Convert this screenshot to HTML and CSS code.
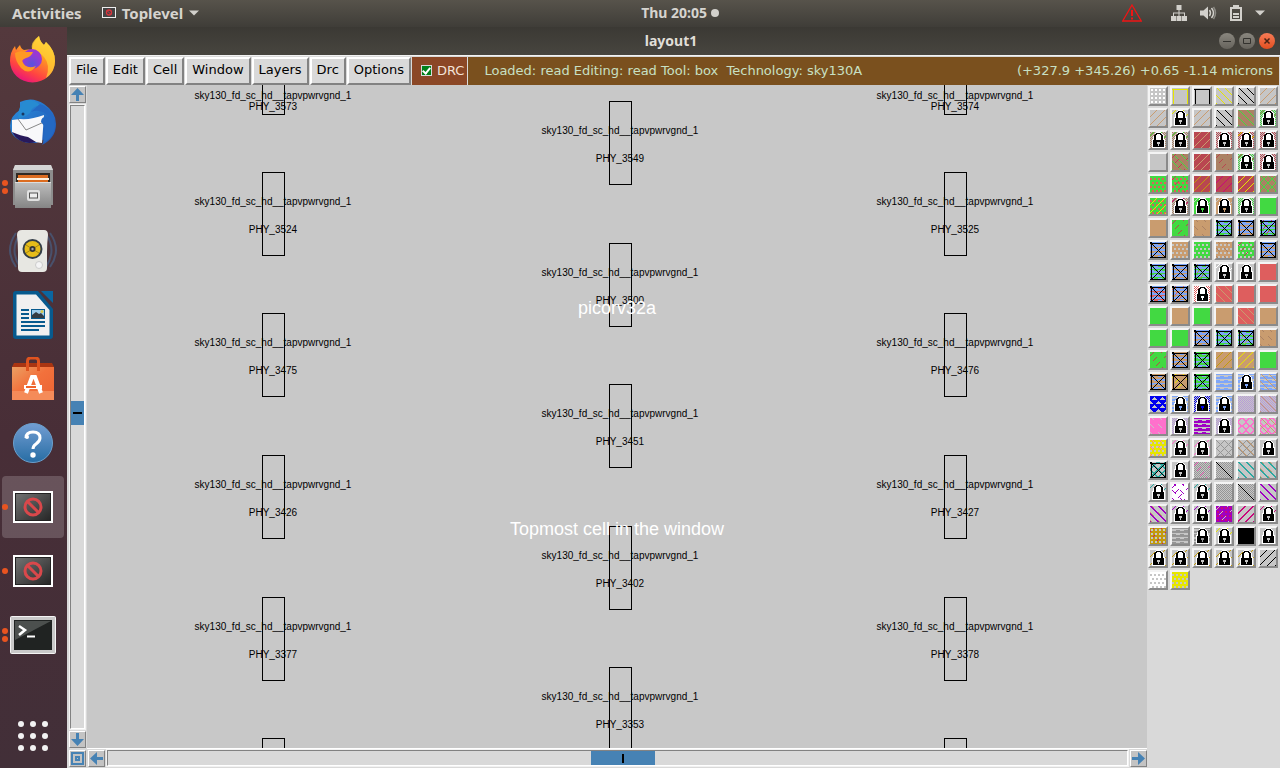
FILE: index.html
```html
<!DOCTYPE html>
<html lang="en">
<head>
<meta charset="utf-8">
<title>layout1</title>
<link rel="stylesheet" href="styles.css">
</head>
<body>
<header class="topbar">
  <div class="topbar-left">
    <button class="top-btn">Activities</button>
    <button class="top-btn app-menu">
      <svg width="14" height="11" viewBox="0 0 14 11"><rect x=".5" y=".5" width="13" height="10" fill="#444" stroke="#eee"/><circle cx="7" cy="5.500" r="2.500" fill="none" stroke="#d8343c" stroke-width="1.300"/><path d="M5 3.500l4 4" stroke="#d8343c"/></svg>
      Toplevel
      <svg width="10" height="6" viewBox="0 0 10 6"><path d="M0 .5h10L5 5.500z" fill="#d2d0cb"/></svg>
    </button>
  </div>
  <button class="top-btn clock">Thu 20:05<span class="dot"></span></button>
  <div class="tray">
    <svg class="warn" width="20" height="18" viewBox="0 0 20 18"><path d="M10 1L19.300 17H.7z" fill="none" stroke="#f01414" stroke-width="1.300"/><path d="M10 6v6M10 13.500v2" stroke="#f01414" stroke-width="2"/></svg>
    <svg width="16" height="16" viewBox="0 0 16 16" fill="#d2d0cb"><path d="M5.500 0h5v5h-5zM0 11h5v5H0zM5.500 11h5v5h-5zM11 11h5v5h-5zM7.500 5h1v6h-1zM2 7.500h12V11h-1V8.500H3V11H2z"/></svg>
    <svg width="17" height="14" viewBox="0 0 17 14"><path d="M0 4.500h3.500L8 .5v13L3.500 9.500H0z" fill="#d2d0cb"/><path d="M9.500 4q2 3 0 6M11.500 2q4 5 0 10" fill="none" stroke="#d2d0cb" stroke-width="1.500"/><path d="M13.500 1q4 6 0 12" fill="none" stroke="#8b8983" stroke-width="1.500"/></svg>
    <svg width="12" height="16" viewBox="0 0 12 16"><path d="M1 3h10v12H1z" fill="none" stroke="#d2d0cb" stroke-width="2"/><path d="M3 0h6v3H3zM3 8h6v2H3zM3 11h6v2H3z" fill="#d2d0cb"/></svg>
    <svg width="10" height="6" viewBox="0 0 10 6"><path d="M0 .5h10L5 5.500z" fill="#d2d0cb"/></svg>
  </div>
</header>
<div class="desktop">
  <nav class="dock" aria-label="Dock">
    <button class="dock-item" aria-label="Firefox">
      <svg width="48" height="48" viewBox="0 0 48 48"><defs><linearGradient id="ff" x1=".8" y1="0" x2=".3" y2="1"><stop offset="0" stop-color="#fff04a"/><stop offset=".4" stop-color="#ff9a22"/><stop offset=".75" stop-color="#ff4541"/><stop offset="1" stop-color="#e8117f"/></linearGradient><radialGradient id="fp" cx=".5" cy=".75"><stop offset="0" stop-color="#5a53dc"/><stop offset="1" stop-color="#9a38d2"/></radialGradient></defs><path d="M30 1q1 6 5 9l2-3q9 8 9 19a22.500 21.500 0 0 1-45 0Q1 17 6 11l1 4q2-3 4-5 1 4 4 5 4-1 8 0 0-8 7-14z" fill="url(#ff)"/><path d="M23 15q-2-8 7-14 1 6 5 9l2-3q9 8 9 19 0 11-9 17 5-13-2-21-5-6-12-7z" fill="#ffcf36" opacity=".75"/><circle cx="23" cy="24" r="10" fill="url(#fp)"/><path d="M6 18q5-3 10-1h8q-2 5-7 6-3 1-4 3 4 9 14 5-7 10-15 2-6-7-6-15z" fill="#ff9924"/></svg>
    </button>
    <button class="dock-item" aria-label="Thunderbird">
      <svg width="50" height="50" viewBox="0 0 50 50"><defs><linearGradient id="tb" x1="0" y1="0" x2="1" y2="1"><stop offset="0" stop-color="#2b91dd"/><stop offset="1" stop-color="#2154b4"/></linearGradient></defs><path d="M12 4Q24-2 36 6q12 8 12 20 0 14-14 21l3-6-9 4Q10 46 3 34-1 20 12 12z" fill="url(#tb)"/><path d="M4 22l8-1q11 1 24-4l-2 28Q12 42 4 34z" fill="#f8f8fa"/><path d="M10 21l8 11 18-8" fill="none" stroke="#888"/><path d="M10 20Q10 5 20 2q7 0 12 5-9 2-10 8-6 5-12 5z" fill="#278bd1"/><path d="M23 14q10-4 18 5-8-1-8 5l4 5-2 16q15-8 11-24Q41 8 32 6z" fill="#2469c3"/><circle cx="15" cy="16" r="1.500" fill="#183762"/><path d="M4 34q9 4 16 5l8 5Q12 48 4 34z" fill="#28195b"/></svg>
    </button>
    <button class="dock-item" aria-label="Files">
      <span class="run two"></span>
      <svg width="44" height="46" viewBox="0 0 44 46"><defs><linearGradient id="fi" x1="0" y1="0" x2="0" y2="1"><stop offset="0" stop-color="#bebebe"/><stop offset="1" stop-color="#858585"/></linearGradient></defs><path d="M4 1h36l2 5v35H2V6z" fill="#8d8d8d"/><path d="M4 1h36l2 5H2z" fill="#d5d5d5"/><path d="M5 9h34v10H5z" fill="#302923"/><path d="M7 11h30v7H7z" fill="#dc6c20"/><path d="M6 14h32v2H6z" fill="#fff0dc"/><path d="M4 18h36v26H4z" fill="url(#fi)"/><path d="M4 18.500h36" stroke="#ddd"/><rect x="16" y="26" width="13" height="11" rx="2" fill="#e1e1e1"/><rect x="18.500" y="29" width="8" height="5" fill="#eee" stroke="#555"/></svg>
    </button>
    <button class="dock-item" aria-label="Rhythmbox">
      <svg width="50" height="44" viewBox="0 0 50 44"><path d="M8 4q-12 17 0 34M12 5Q1 21 12 38M42 4q12 17 0 34M38 5q11 16 0 33" fill="none" stroke="#49516c" stroke-width="2"/><path d="M14 1h22q4 0 4 5-1 8-1 17v16q0 4-4 4H14q-4 0-4-4V23q0-9-1-17 0-5 5-5z" fill="#e7e7e2"/><circle cx="24.500" cy="20" r="10" fill="#333d47"/><circle cx="24.500" cy="20" r="8" fill="#e6bc19"/><path d="M18 16l13 8M31 16l-13 8" stroke="#a88a12"/><circle cx="24.500" cy="20" r="3" fill="#333"/><circle cx="24.500" cy="20" r="1.200" fill="#aaa"/><circle cx="31" cy="36" r="3.500" fill="#f4f4f4" stroke="#ccc"/></svg>
    </button>
    <button class="dock-item" aria-label="Writer">
      <svg width="40" height="48" viewBox="0 0 40 48"><path d="M3 0h22l15 18v27q0 3-3 3H3q-3 0-3-3V3q0-3 3-3z" fill="#075a8e"/><path d="M28 0h12v12z" fill="#0b66a0"/><path d="M3.500 3.500H23L36.500 19v25.500h-33z" fill="#f0f0f0"/><path d="M8 19h8M8 23h8M8 27h8M8 31h24M8 35h24M8 39h18" stroke="#075a8e" stroke-width="2"/><path d="M18 18h14v10H18z" fill="#075a8e"/><path d="M19 19h12v8H19z" fill="#9cccec"/><path d="M19 27v-3l4-3 3 2 2-1 3 3v2z" fill="#343c43"/><circle cx="29" cy="20.500" r="1.500" fill="#d9c84b"/></svg>
    </button>
    <button class="dock-item" aria-label="Software">
      <svg width="42" height="44" viewBox="0 0 42 44"><defs><linearGradient id="sw" x1="0" y1="0" x2="1" y2="1"><stop offset="0" stop-color="#eca063"/><stop offset=".45" stop-color="#f2713c"/><stop offset="1" stop-color="#eb6333"/></linearGradient></defs><path d="M2 6h38l2 4v3H0v-3z" fill="#a93512"/><path d="M0 10h42v33H0z" fill="url(#sw)"/><path d="M0 34h42v9H0z" fill="#f58b59"/><path d="M15.500 14V4q0-3 3-3h5q3 0 3 3v10" fill="none" stroke="#df531f" stroke-width="3"/><path d="M14 36l6-16h3l6 16M12 30h18" fill="none" stroke="#fff" stroke-width="4"/><path d="M14 30h10" stroke="#ef642c" stroke-width="2"/></svg>
    </button>
    <button class="dock-item" aria-label="Help">
      <svg width="42" height="42" viewBox="0 0 42 42"><defs><linearGradient id="hp" x1="0" y1="0" x2="0" y2="1"><stop offset="0" stop-color="#729dd2"/><stop offset="1" stop-color="#276da4"/></linearGradient></defs><circle cx="21" cy="21" r="19.500" fill="url(#hp)" stroke="#6ba0cd"/><path d="M14 16q0-6 7-6 7 0 7 6 0 3-4 6-3 2-3 5" fill="none" stroke="#fff" stroke-width="3"/><circle cx="15" cy="15" r="2" fill="#fff"/><circle cx="21" cy="33" r="2.700" fill="#fff"/></svg>
    </button>
    <button class="dock-item active" aria-label="Toplevel 1">
      <span class="run"></span>
      <svg width="40" height="32" viewBox="0 0 40 32"><defs><linearGradient id="xw" x1="0" y1="0" x2="1" y2="1"><stop offset="0" stop-color="#777"/><stop offset="1" stop-color="#222"/></linearGradient></defs><rect x="1" y="1" width="38" height="30" fill="url(#xw)" stroke="#fff" stroke-width="2"/><rect x="2.500" y="2.500" width="35" height="27" fill="none" stroke="#222"/><circle cx="20" cy="16" r="8" fill="none" stroke="#d9484b" stroke-width="3"/><path d="M14.500 10.500l11 11" stroke="#d9484b" stroke-width="3"/></svg>
    </button>
    <button class="dock-item" aria-label="Toplevel 2">
      <span class="run"></span>
      <svg width="40" height="32" viewBox="0 0 40 32"><rect x="1" y="1" width="38" height="30" fill="url(#xw)" stroke="#fff" stroke-width="2"/><rect x="2.500" y="2.500" width="35" height="27" fill="none" stroke="#222"/><circle cx="20" cy="16" r="8" fill="none" stroke="#d9484b" stroke-width="3"/><path d="M14.500 10.500l11 11" stroke="#d9484b" stroke-width="3"/></svg>
    </button>
    <button class="dock-item" aria-label="Terminal">
      <span class="run two"></span>
      <svg width="46" height="38" viewBox="0 0 46 38"><rect x=".5" y=".5" width="45" height="37" rx="1" fill="#c9c9c9" stroke="#f4f4f4"/><rect x="4" y="4" width="38" height="30" fill="#202322"/><path d="M5 5h36L5 24z" fill="#4c504e"/><path d="M9 10l6 4-6 5" fill="none" stroke="#fff" stroke-width="2.500"/><path d="M17 20.500h8" stroke="#fff" stroke-width="2"/></svg>
    </button>
    <button class="dock-item apps" aria-label="Show applications">
      <svg width="32" height="32" viewBox="0 0 32 32" fill="#f2f2f2"><circle cx="4" cy="4" r="3"/><circle cx="16" cy="4" r="3"/><circle cx="28" cy="4" r="3"/><circle cx="4" cy="16" r="3"/><circle cx="16" cy="16" r="3"/><circle cx="28" cy="16" r="3"/><circle cx="4" cy="28" r="3"/><circle cx="16" cy="28" r="3"/><circle cx="28" cy="28" r="3"/></svg>
    </button>
  </nav>
  <main class="window">
    <div class="titlebar">
      <h1 class="title">layout1</h1>
      <div class="controls">
        <button class="ctl" aria-label="Minimize"><svg width="8" height="8" viewBox="0 0 8 8"><path d="M0 4.500h8" stroke="#33322e"/></svg></button>
        <button class="ctl" aria-label="Maximize"><svg width="8" height="8" viewBox="0 0 8 8"><path d="M.5 1.500h7v5h-7z" fill="none" stroke="#33322e"/></svg></button>
        <button class="ctl close" aria-label="Close"><svg width="8" height="8" viewBox="0 0 8 8"><path d="M1.500 1.500l5 5M6.500 1.500l-5 5" stroke="#4a2314" stroke-width="1.500"/></svg></button>
      </div>
    </div>
    <div class="menubar">
      <button class="menu">File</button><button class="menu">Edit</button><button class="menu">Cell</button><button class="menu">Window</button><button class="menu">Layers</button><button class="menu">Drc</button><button class="menu">Options</button>
      <label class="drc"><input type="checkbox" class="drc-box" checked>DRC</label>
      <div class="status"><span class="loaded">Loaded: read Editing: read Tool: box&nbsp; Technology: sky130A</span><span>(+327.9 +345.26) +0.65 -1.14 microns</span></div>
    </div>
    <div class="work">
      <div class="editor">
        <div class="vbar">
          <button class="arrow" aria-label="Scroll up"><svg width="13" height="13" viewBox="0 0 13 13"><path d="M6.500 0L13 7H8v6H5V7H0z"/></svg></button>
          <div class="trough vertical"><div class="space before"></div><div class="thumb"></div><div class="space after"></div></div>
          <button class="arrow" aria-label="Scroll down"><svg width="13" height="13" viewBox="0 0 13 13"><path d="M6.500 13L13 6H8V0H5v6H0z"/></svg></button>
        </div>
        <svg class="layout" id="layout" role="img" aria-label="Cell layout"></svg>
        <button class="arrow corner" aria-label="Zoom to fit"><svg width="13" height="13" viewBox="0 0 13 13"><path d="M0 0h13v13H0zM2 2v9h9V2zM4 4h5v5H4zM6 6v1h1V6z" fill-rule="evenodd"/></svg></button>
        <div class="hbar">
          <button class="arrow" aria-label="Scroll left"><svg width="13" height="13" viewBox="0 0 13 13"><path d="M0 6.500L7 0v5h6v3H7v5z"/></svg></button>
          <div class="trough horizontal"><div class="space before"></div><div class="thumb"></div><div class="space after"></div></div>
          <button class="arrow" aria-label="Scroll right"><svg width="13" height="13" viewBox="0 0 13 13"><path d="M13 6.500L6 0v5H0v3h6v5z"/></svg></button>
        </div>
      </div>
      <aside class="palette" id="palette" aria-label="Layers"></aside>
    </div>
  </main>
</div>
<script src="app.js"></script>
</body>
</html>
```
FILE: styles.css
```css
* { box-sizing: border-box; }
body {
  margin: 0;
  height: 100vh;
  display: flex;
  flex-direction: column;
  overflow: hidden;
  font-family: "DejaVu Sans", sans-serif;
  font-size: 13px;
  background: #d9d9d9;
}
button { font: inherit; color: inherit; padding: 0; margin: 0; border: 0; background: none; }
svg { display: block; }

.topbar {
  flex: none;
  height: 27px;
  display: grid;
  grid-template-columns: 628fr auto 545fr;
  align-items: center;
  padding: 0 15px 2px 12px;
  background: linear-gradient(#57534b, #3f3d38);
  color: #d6d4cf;
  font-family: "Noto Sans", sans-serif;
  font-weight: 700;
  font-size: 14px;
  line-height: 24px;
}
.topbar-left { display: flex; gap: 20px; font-size: 15px; }
.top-btn { display: flex; align-items: center; gap: 6px; }
.clock { gap: 4px; }
.dot { width: 8px; height: 8px; border-radius: 50%; background: #d2d0cb; }
.tray { display: flex; align-items: center; justify-content: flex-end; gap: 13px; }
.warn { margin-right: 16px; }

.desktop { flex: 1; min-height: 0; display: flex; }
.dock {
  flex: none;
  width: 67px;
  display: flex;
  flex-direction: column;
  background: linear-gradient(#54393d, #482e37 55%, #422f38);
}
.dock-item {
  position: relative;
  height: 64px;
  display: flex;
  align-items: center;
  justify-content: center;
  padding-right: 1px;
}
.active::before {
  content: "";
  position: absolute;
  inset: 1px 3px 1px 2px;
  border-radius: 4px;
  background: rgba(255, 255, 255, .18);
}
.active svg { position: relative; }
.apps { margin-top: auto; }
.run {
  position: absolute;
  left: 2px;
  width: 6px;
  height: 6px;
  border-radius: 50%;
  background: #e95420;
}
.run.two { top: 25px; }
.run.two::after {
  content: "";
  position: absolute;
  left: 0;
  top: 8px;
  width: 6px;
  height: 6px;
  border-radius: 50%;
  background: #e95420;
}

.window { flex: 1; min-width: 0; display: flex; flex-direction: column; }
.titlebar {
  height: 28px;
  display: grid;
  grid-template-columns: 1fr auto 1fr;
  align-items: center;
  padding-right: 5px;
  background: linear-gradient(#3b3934, #47453f);
  color: #e0ded8;
}
.title {
  grid-column: 2;
  margin: 0;
  font: 700 14px/28px "Noto Sans", sans-serif;
}
.controls { display: flex; justify-content: flex-end; gap: 4px; }
.ctl {
  width: 16px;
  height: 16px;
  border-radius: 50%;
  display: flex;
  align-items: center;
  justify-content: center;
  background: linear-gradient(#8a877f, #66635c);
}
.close { background: linear-gradient(#f77b56, #e14f20); }

.menubar {
  height: 30px;
  display: flex;
  border-top: 1px solid #f2f2f2;
  padding: 1px 1px 0 2px;
  background: #d9d9d9;
  line-height: 22px;
}
.menu {
  padding: 0 5px 2px;
  border: 2px solid;
  border-color: #fff #828282 #828282 #fff;
  margin-right: 1px;
  background: #d9d9d9;
  color: #000;
}
.drc {
  display: flex;
  align-items: center;
  gap: 5px;
  padding: 0 3px 1px 9px;
  border-right: 1px solid #d9d9d9;
  background: #8b4726;
  color: #f3e2d8;
}
.drc-box {
  appearance: none;
  width: 11px;
  height: 11px;
  margin: 0;
  border: 1px solid #d9d9d9;
  background: #00801a;
}
.drc-box::after {
  content: "";
  display: block;
  width: 3px;
  height: 6px;
  margin: 0 auto;
  border: solid #fff;
  border-width: 0 2px 2px 0;
  transform: rotate(40deg);
}
.status {
  flex: 1;
  display: flex;
  justify-content: space-between;
  align-items: center;
  padding: 0 6px 1px 16px;
  background: #7a501e;
  color: #c8e0c4;
  white-space: nowrap;
}

.work { flex: 1; min-height: 0; display: flex; }
.editor {
  flex: 1;
  min-width: 0;
  display: grid;
  grid-template-columns: 20px 1fr;
  grid-template-rows: 1fr 20px;
}
.vbar { display: flex; flex-direction: column; gap: 1px; padding: 1px 1px 0 2px; min-height: 0; }
.hbar { display: flex; gap: 1px; padding: 1px 0 1px 1px; border-top: 1px solid #fff; }
.arrow {
  flex: none;
  width: 17px;
  height: 17px;
  padding: 1px;
  border: 1px solid;
  border-color: #fff #828282 #828282 #fff;
  background: #c3c3c3;
  fill: #4682b4;
}
.corner { margin: 2px 1px 1px 2px; }
.trough {
  flex: 1;
  display: flex;
  border: 1px solid;
  border-color: #828282 #fff #fff #828282;
  outline: 1px solid #f2f2f2;
}
.trough.vertical { flex-direction: column; margin: 1px; }
.trough.horizontal { margin: 0 1px 1px; }
.thumb { background: #4682b4; display: flex; }
.thumb::after { content: ""; margin: auto; background: #000; }
.vertical .thumb { flex: 24; }
.vertical .before { flex: 295; }
.vertical .after { flex: 303; }
.vertical .thumb::after { width: 9px; height: 2px; }
.horizontal .thumb { flex: 63; }
.horizontal .before { flex: 483; }
.horizontal .after { flex: 472; }
.horizontal .thumb::after { width: 2px; height: 9px; }

.layout { width: 100%; height: 100%; background: #c8c8c8; overflow: hidden; }
.cell { fill: none; stroke: #000; shape-rendering: crispEdges; }
.label { font: 10px "Liberation Sans", sans-serif; text-anchor: middle; fill: #000; }
.note { font: 18px "Liberation Sans", sans-serif; text-anchor: middle; fill: #fff; }

.palette {
  flex: none;
  display: grid;
  grid-template-columns: repeat(6, 20px);
  grid-auto-rows: 20px;
  gap: 2px;
  padding: 1px 2px 0 1px;
  background: #d9d9d9;
}
.swatch {
  border: 2px solid;
  border-color: #f4f4f4 #8a8a8a #8a8a8a #f4f4f4;
}
```
FILE: app.js
```js
const NS = "http://www.w3.org/2000/svg";

const layout = document.getElementById("layout");
function add(tag, attrs, text) {
  const el = document.createElementNS(NS, tag);
  for (const k in attrs) el.setAttribute(k, attrs[k]);
  if (text) el.textContent = text;
  layout.append(el);
}
// Each tap cell: left edge, top edge, instance number.
const cells = [
  [175, -54, 3573], [857, -54, 3574],
  [522, 16, 3549], [175, 87, 3524], [857, 87, 3525],
  [522, 158, 3500], [175, 228, 3475], [857, 228, 3476],
  [522, 299, 3451], [175, 370, 3426], [857, 370, 3427],
  [522, 441, 3402], [175, 512, 3377], [857, 512, 3378],
  [522, 582, 3353], [175, 653, 0], [857, 653, 0]
];
for (const [x, y, n] of cells) {
  add("rect", { class: "cell", x: x + 0.5, y: y + 0.5, width: 22, height: 83 });
  if (!n) continue;
  const clipped = y < 0;
  add("text", { class: "label", x: x + 11, y: clipped ? 14 : y + 33 }, "sky130_fd_sc_hd__tapvpwrvgnd_1");
  add("text", { class: "label", x: x + 11, y: clipped ? 25 : y + 61 }, "PHY_" + n);
}
add("text", { class: "note", x: 530, y: 229 }, "picorv32a");
add("text", { class: "note", x: 530, y: 450 }, "Topmost cell in the window");

const colors = {
  n: "#c6c6c6", g: "#42d942", t: "#c99c6f", r: "#b94650", b: "#ab8264",
  p: "#de5e5e", u: "#7ea6f9", y: "#e6e600", B: "#0000ee", k: "#000000",
  w: "#ffffff", m: "#c8087c", o: "#c29a0c", q: "#ff70cc", v: "#9f00c3",
  l: "#b79ad8", a: "#2ba8a0", s: "#959595"
};
// Stipple tests over a 16 by 16 grid.
const stipples = {
  "/": (x, y) => (x + y) % 8 === 6,
  "\\": (x, y) => (x - y + 16) % 8 === 1,
  "T": (x, y) => (x - y + 16) % 8 < 2,
  "U": (x, y) => (x + y) % 8 > 5,
  "1": (x, y) => x === y,
  "#": (x, y) => (x + 3) % 4 < 2 && (y + 3) % 4 < 2,
  "D": (x, y) => y % 4 > 1 && (x + (y >> 2) % 2 * 2) % 4 < 2,
  ":": (x, y) => (x + y) % 8 === 3 && (y + (x + y >> 3) * 3) % 8 < 4,
  ";": (x, y) => (x - y + 16) % 8 === 2 && (y + 2) % 8 < 4,
  "~": (x, y) => y % 4 === 1 || (y % 4 === 2 && (x + (y >> 2) * 4) % 8 < 4),
  "^": (x, y) => Math.abs((x + (y >> 2) % 2 * 4) % 8 - 4) < y % 4,
  "%": (x, y) => (x + y) % 2 === 0,
  "O": (x, y) => { const d = Math.hypot(x % 8 - 3.5, y % 8 - 3.5); return d > 2.6 && d < 4.3; },
  "d": (x, y) => (x + y) % 8 === 0 || (x - y + 16) % 8 === 0,
  "F": (x, y) => y === 1 || ((x === 1 || x === 15) && y > 0),
  "X": (x, y) => x === y || x + y === 16 || y === 1 || y === 15 || x === 1 || x === 15
};
const lock = '<path d="M3 9V4l2-2 1-2h5l1 2 2 2v5z" fill="#fff"/><path d="M2 7h13v9H2z" fill="#fff"/>' +
  '<path d="M6 1h5v1H6zM5 2h2v1H5zM10 2h2v1h-2zM4 3h2v5H4zM11 3h2v5h-2zM3 8h11v7H3z" fill="#000"/>';
const rows = [
  "n#w nFy nFk n\\y n\\k n/t",
  "n/t n:yL n/t n\\k b\\g n%g:bL",
  "n%b:gL n%b:gL r/t n%rL n%r:yL n%rL",
  "n b\\g:r r/t b:r n%g:rL n%rL",
  "gDp gDp:r r/o r/m r/y b\\g/g",
  "gDp/y n%b:mL g:nL t:nL n%gL g",
  "t g:r t;b u~gXk u~tXk u~g:rXk",
  "u~tXk tDn gDn tDn;b gDn:r u~tXk",
  "u~gXk u~tXk u~g:bXk n:wL nL p",
  "u~pXk u~t:pXk w%pL p\\t p p",
  "g t g t p\\t t",
  "g g u~tXk u~gXk u~g:tXk t;b",
  "g:r t~uXk g~uXk t/o t/y g",
  "t~uXk t:yXk g~uXk u~n u~nL u~n\\t",
  "B^n u~nL B%nL u~nL n%l n%l\\t",
  "q;n n%lL v~n n%lL nOq nOq\\t",
  "yDn;q n:qL n/qL nds nds\\t nL",
  "nTaUaXk nL n%s:q n%s1k nTa nTa;t",
  "n:aL w:v;v n:aL n%s n%s1k nTv",
  "nTv;t n:vL n:vL v#m:n nUm n:mL",
  "o:m#n s~n s~nL n:yL k nL",
  "n/oL n/oL n/oL n/oL n/oL n/k",
  "wDn yDn"
];
function swatch(spec) {
  let art = `<rect width="16" height="16" fill="${colors[spec[0]]}"/>`;
  let i = 1;
  while (i < spec.length) {
    if (spec[i] === "L") {
      art += lock + `<path d="M7 10h3v2h-1v2h-1v-2h-1z" fill="${colors[spec[0]]}"/>`;
      i += 1;
      continue;
    }
    let d = "";
    for (let y = 0; y < 16; y++) {
      for (let x = 0; x < 16; x++) if (stipples[spec[i]](x, y)) d += `M${x} ${y}h1v1h-1z`;
    }
    art += `<path d="${d}" fill="${colors[spec[i + 1]]}"/>`;
    i += 2;
  }
  return `<svg width="16" height="16" viewBox="0 0 16 16" shape-rendering="crispEdges">${art}</svg>`;
}
const palette = document.getElementById("palette");
rows.join(" ").split(" ").forEach((spec, i) => {
  const button = document.createElement("button");
  button.className = "swatch";
  button.setAttribute("aria-label", "Layer " + (i + 1));
  button.innerHTML = swatch(spec);
  palette.append(button);
});
```
